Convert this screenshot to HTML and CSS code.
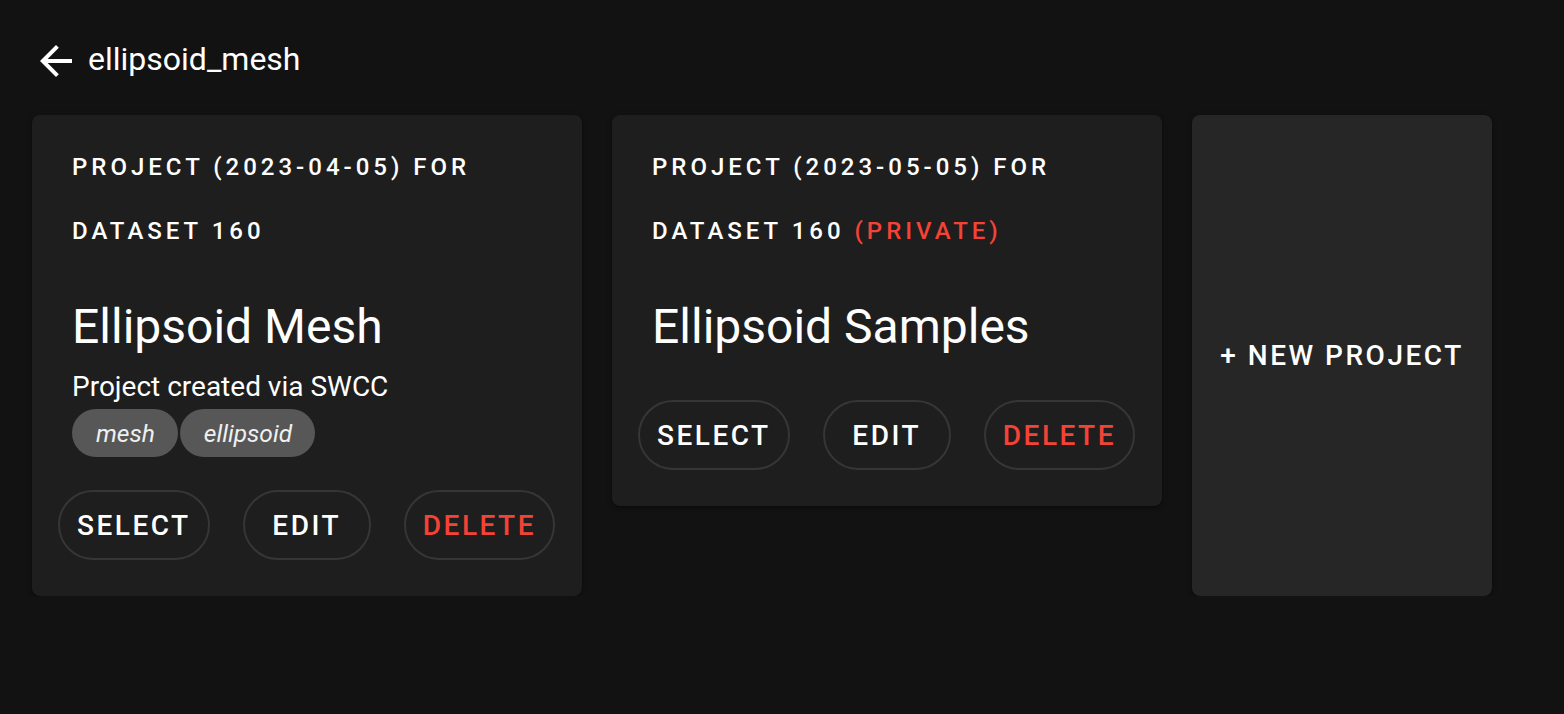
FILE: index.html
```html
<!DOCTYPE html>
<html lang="en">
<head>
<meta charset="utf-8">
<title>ellipsoid_mesh</title>
<link rel="stylesheet" href="styles.css">
</head>
<body>
<div class="page">
  <header class="topbar">
    <svg class="back" viewBox="0 0 24 24" aria-hidden="true"><path d="M20 11H7.83l5.59-5.59L12 4l-8 8 8 8 1.41-1.41L7.83 13H20v-2z"/></svg>
    <h1 class="page-title">ellipsoid_mesh</h1>
  </header>
  <main class="cards">
    <section class="card">
      <div class="overline">Project (2023-04-05) for<br>dataset 160</div>
      <h2 class="card-title">Ellipsoid Mesh</h2>
      <div class="card-text">
        <div class="desc">Project created via SWCC</div>
        <div class="chips">
          <span class="chip">mesh</span>
          <span class="chip">ellipsoid</span>
        </div>
      </div>
      <div class="actions">
        <button class="btn">Select</button>
        <button class="btn">Edit</button>
        <button class="btn btn-danger">Delete</button>
      </div>
    </section>
    <section class="card">
      <div class="overline">Project (2023-05-05) for<br>dataset 160 <span class="private">(private)</span></div>
      <h2 class="card-title">Ellipsoid Samples</h2>
      <div class="card-text"></div>
      <div class="actions">
        <button class="btn">Select</button>
        <button class="btn">Edit</button>
        <button class="btn btn-danger">Delete</button>
      </div>
    </section>
    <section class="card card-new">
      <span class="new-label">+ New Project</span>
    </section>
  </main>
</div>
</body>
</html>
```

FILE: styles.css
```css
* { box-sizing: border-box; }
html, body {
  margin: 0;
  padding: 0;
  background: #121212;
  color: #ffffff;
  font-family: Roboto, "Liberation Sans", sans-serif;
}
.page {
  padding: 37px 32px 0 32px;
}
.topbar {
  display: flex;
  align-items: center;
  height: 48px;
  gap: 8px;
}
.back {
  width: 48px;
  height: 48px;
  fill: #ffffff;
  flex: none;
}
.page-title {
  margin: -5px 0 0 0;
  font-size: 32px;
  font-weight: 400;
  line-height: 48px;
}
.cards {
  display: flex;
  align-items: flex-start;
  gap: 30px;
  margin-top: 30px;
}
.card {
  width: 550px;
  background: #1e1e1e;
  border-radius: 8px;
  padding: 20px 0 36px 0;
  box-shadow: 0 2px 2px rgba(0,0,0,0.25), 0 1px 6px rgba(0,0,0,0.2);
}
.overline {
  padding: 0 40px;
  font-size: 24px;
  font-weight: 500;
  letter-spacing: 4px;
  line-height: 64px;
  text-transform: uppercase;
}
.private { color: #f44336; }
.card-title {
  margin: 32px 0 0 0;
  padding: 0 40px;
  font-size: 48px;
  font-weight: 400;
  line-height: 64px;
}
.card-text {
  padding: 8px 40px 0 40px;
}
.desc {
  font-size: 28px;
  line-height: 40px;
}
.chips {
  display: flex;
  gap: 2px;
  margin-top: 2px;
}
.chip {
  display: inline-flex;
  align-items: center;
  height: 48px;
  padding: 0 23px 0 24px;
  border-radius: 24px;
  background: #575757;
  color: #f0f0f0;
  font-size: 24.5px;
  font-style: italic;
}
.actions {
  display: flex;
  justify-content: space-between;
  margin-top: 33px;
  padding: 0 27px 0 26px;
}
.btn {
  height: 70px;
  min-width: 128px;
  padding: 0 17px;
  border: 2px solid #363636;
  border-radius: 35px;
  background: transparent;
  color: #ffffff;
  font-family: Roboto, "Liberation Sans", sans-serif;
  font-size: 28px;
  font-weight: 500;
  letter-spacing: 2.5px;
  text-transform: uppercase;
}
.btn-danger { color: #f44336; }
.card-new {
  width: 300px;
  align-self: stretch;
  background: #262626;
  display: flex;
  align-items: center;
  justify-content: center;
  padding: 0;
}
.new-label {
  font-size: 28px;
  font-weight: 500;
  letter-spacing: 2.5px;
  text-transform: uppercase;
}
```
